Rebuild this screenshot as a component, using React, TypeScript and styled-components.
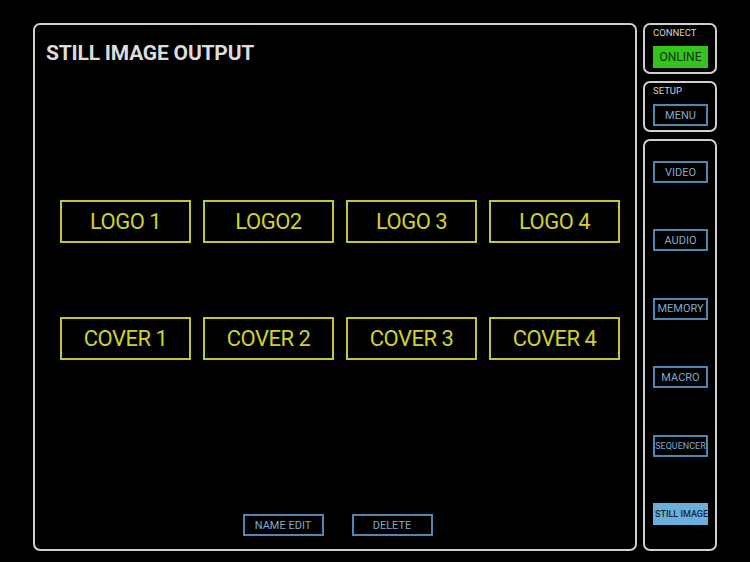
import React from "react";
import styled, {createGlobalStyle} from "styled-components";

const GlobalStyle = createGlobalStyle`
  html, body {
    margin: 0;
    padding: 0;
    background: #000;
  }

  body {
    font-family: Roboto, "Liberation Sans", sans-serif;
  }
`;

const imageSlots = [
  ["LOGO 1", "LOGO2", "LOGO 3", "LOGO 4"],
  ["COVER 1", "COVER 2", "COVER 3", "COVER 4"],
];

const navItems = ["VIDEO", "AUDIO", "MEMORY", "MACRO", "SEQUENCER", "STILL IMAGE"];

export default function App() {
  return (
    <>
      <GlobalStyle />
      <Screen>
        <MainPanel>
          <Title>STILL IMAGE OUTPUT</Title>

          <SlotGrid>
            {imageSlots.flat().map((label) => (
              <SlotButton key={label}>{label}</SlotButton>
            ))}
          </SlotGrid>

          <ActionRow>
            <BlueButton>NAME EDIT</BlueButton>
            <BlueButton>DELETE</BlueButton>
          </ActionRow>
        </MainPanel>

        <SideColumn>
          <SideBox>
            <BoxLabel>CONNECT</BoxLabel>
            <OnlineButton>ONLINE</OnlineButton>
          </SideBox>

          <SideBox>
            <BoxLabel>SETUP</BoxLabel>
            <BlueButton $small>MENU</BlueButton>
          </SideBox>

          <NavBox>
            {navItems.map((item) => (
              <BlueButton
                key={item}
                $small
                $active={item === "STILL IMAGE"}
                $tiny={item.length > 8}
              >
                {item}
              </BlueButton>
            ))}
          </NavBox>
        </SideColumn>
      </Screen>
    </>
  );
}

const Screen = styled.div`
  display: flex;
  gap: 6px;
  width: 750px;
  height: 562px;
  padding: 23px 0 0 33px;
  box-sizing: border-box;
  background: #000;
`;

const Panel = styled.div`
  box-sizing: border-box;
  border: 2px solid #cfcfcf;
  border-radius: 7px;
`;

const MainPanel = styled(Panel)`
  display: flex;
  flex-direction: column;
  width: 604px;
  height: 528px;
  padding: 15px 0 13px 11px;
`;

const Title = styled.h1`
  margin: 0;
  font-size: 21px;
  line-height: 26px;
  font-weight: 700;
  color: #dcdcdc;
  letter-spacing: -0.2px;
`;

const SlotGrid = styled.div`
  display: grid;
  grid-template-columns: repeat(4, 131px);
  grid-auto-rows: 43px;
  column-gap: 12px;
  row-gap: 74px;
  margin: 134px 0 0 14px;
`;

const SlotButton = styled.button`
  box-sizing: border-box;
  margin: 0;
  padding: 0;
  background: transparent;
  border: 2px solid #c4c62c;
  color: #cfd12e;
  font-family: Roboto, "Liberation Sans", sans-serif;
  font-size: 22px;
  font-weight: 400;
  letter-spacing: -0.5px;
`;

const ActionRow = styled.div`
  display: flex;
  justify-content: center;
  gap: 28px;
  margin-top: auto;
  padding-right: 6px;
`;

const BlueButton = styled.button<{$small?: boolean; $active?: boolean; $tiny?: boolean}>`
  box-sizing: border-box;
  width: ${({$small}) => ($small ? "55px" : "81px")};
  height: 22px;
  margin: 0;
  padding: 0;
  border: 2px solid ${({$active}) => ($active ? "#6aaedb" : "#4e87b0")};
  background: ${({$active}) => ($active ? "#6aaedb" : "transparent")};
  color: ${({$active}) => ($active ? "#15283a" : "#80aacb")};
  font-family: Roboto, "Liberation Sans", sans-serif;
  font-size: ${({$tiny}) => ($tiny ? "9px" : "11px")};
  font-weight: ${({$active}) => ($active ? 500 : 400)};
  white-space: nowrap;
`;

const SideColumn = styled.div`
  display: flex;
  flex-direction: column;
  gap: 7px;
  width: 74px;
`;

const SideBox = styled(Panel)`
  display: flex;
  flex-direction: column;
  height: 51px;
  padding: 2px 0 0 8px;
`;

const BoxLabel = styled.span`
  font-size: 9.5px;
  line-height: 12px;
  color: #d4d4d4;
  margin: 0 0 7px 0;
`;

const OnlineButton = styled.button`
  box-sizing: border-box;
  width: 55px;
  height: 22px;
  margin: 0;
  padding: 0;
  border: none;
  background: #33c51b;
  color: #123009;
  font-family: Roboto, "Liberation Sans", sans-serif;
  font-size: 12px;
`;

const NavBox = styled(Panel)`
  display: flex;
  flex-direction: column;
  justify-content: space-between;
  height: 412px;
  padding: 20px 0 24px 8px;
`;
